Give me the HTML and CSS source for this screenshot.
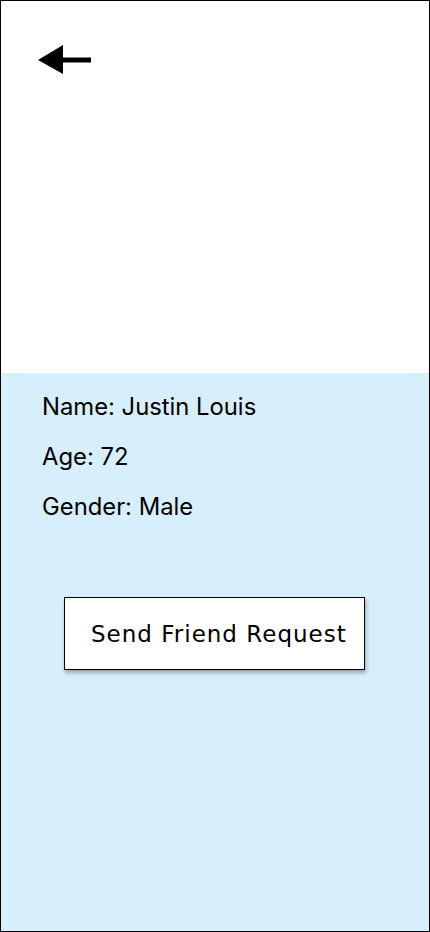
FILE: index.html
```html
<!DOCTYPE html>
<html>
<head>
<meta charset="utf-8">
<link rel="stylesheet" href="styles.css">
</head>
<body>
<div class="screen">
  <div class="top">
    <svg class="back" width="54" height="30" viewBox="0 0 54 30">
      <polygon points="0,15 25,0 25,29" fill="#000"/>
      <rect x="24" y="12.5" width="29" height="5" fill="#000"/>
    </svg>
  </div>
  <div class="info">
    <p class="line">Name: Justin Louis</p>
    <p class="line">Age: 72</p>
    <p class="line">Gender: Male</p>
    <div class="btn">Send Friend Request</div>
  </div>
</div>
</body>
</html>
```
FILE: styles.css
```css
html, body { margin: 0; padding: 0; }
body { width: 430px; height: 932px; overflow: hidden; }
.screen {
  width: 430px; height: 932px; box-sizing: border-box;
  border: 1px solid #000;
  display: flex; flex-direction: column;
  background: #fff;
}
.top { height: 372px; flex: none; padding: 44px 0 0 37px; box-sizing: border-box; }
.back { display: block; }
.info {
  flex: 1; background: #d7effc;
  padding: 9px 0 0 41px;
}
.line {
  margin: 0; font-family: Inter, sans-serif; font-size: 23.8px; line-height: 50px; color: #000;
}
.btn {
  margin: 65px 0 0 22px;
  width: 301px; height: 73px; box-sizing: border-box;
  border: 1px solid #000; background: #fff;
  box-shadow: 1px 3px 4px rgba(0,0,0,0.3);
  font-family: "DejaVu Sans", sans-serif; font-size: 23px; letter-spacing: 1px;
  line-height: 69px; padding: 2px 0 0 26px; color: #000;
  white-space: nowrap;
}
```
